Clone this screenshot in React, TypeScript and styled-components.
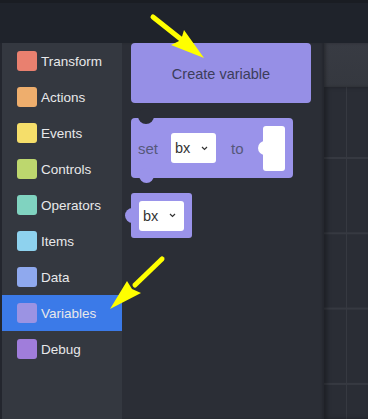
import React from "react";
import styled, { createGlobalStyle } from "styled-components";

const Global = createGlobalStyle`
  html, body { margin: 0; padding: 0; background: #1f232b; }
  body { font-family: "Liberation Sans", Arial, sans-serif; }
`;

const Page = styled.div`
  position: relative;
  width: 368px;
  height: 419px;
  display: flex;
  flex-direction: column;
  background: #23262e;
  overflow: hidden;
`;

const TopBar = styled.div`
  height: 43px;
  flex: none;
  background: #1f232b;
  border-top: 3px solid #1a1d23;
  box-sizing: border-box;
`;

const Main = styled.div`
  flex: 1;
  display: flex;
  padding-left: 2px;
`;

const Sidebar = styled.div`
  width: 120px;
  flex: none;
  background: #343840;
  display: flex;
  flex-direction: column;
`;

const Category = styled.div<{ $active?: boolean }>`
  height: 36px;
  display: flex;
  align-items: center;
  gap: 4px;
  padding-left: 15px;
  background: ${(p) => (p.$active ? "#3b7ae8" : "transparent")};
  color: #e8e8ea;
  font-size: 13.5px;
`;

const Swatch = styled.span<{ $color: string }>`
  width: 20px;
  height: 20px;
  border-radius: 3px;
  background: ${(p) => p.$color};
  flex: none;
`;

const Flyout = styled.div`
  width: 202px;
  flex: none;
  background: #2b2e36;
  box-shadow: inset -2px 0 2px rgba(0, 0, 0, 0.15);
  display: flex;
  flex-direction: column;
  align-items: flex-start;
  padding-left: 9px;
  box-sizing: border-box;
  gap: 15px;
`;

const CreateButton = styled.div`
  width: 180px;
  height: 60px;
  border-radius: 4px;
  background: #968fe6;
  color: #3c3d5a;
  font-size: 14.5px;
  display: flex;
  align-items: center;
  justify-content: center;
  padding-top: 2px;
  box-sizing: border-box;
`;

const SetBlock = styled.div`
  position: relative;
  width: 162px;
  height: 60px;
  border-radius: 4px;
  background: #9a93ea;
  display: flex;
  align-items: center;
  padding-left: 7px;
  box-sizing: border-box;
  &::before {
    content: "";
    position: absolute;
    left: 7px;
    top: -10px;
    width: 16px;
    height: 16px;
    border-radius: 50%;
    background: #2b2e36;
  }
  &::after {
    content: "";
    position: absolute;
    left: 8px;
    bottom: -5px;
    width: 15px;
    height: 15px;
    border-radius: 50%;
    background: #9a93ea;
  }
`;

const GetBlock = styled.div`
  position: relative;
  width: 61px;
  height: 45px;
  border-radius: 3px;
  background: #9a93ea;
  display: flex;
  align-items: center;
  padding-left: 8px;
  box-sizing: border-box;
  &::before {
    content: "";
    position: absolute;
    left: -6px;
    top: 15px;
    width: 15px;
    height: 15px;
    border-radius: 50%;
    background: #9a93ea;
  }
`;

const Word = styled.span<{ $ml: number }>`
  margin-left: ${(p) => p.$ml}px;
  color: #56587a;
  font-size: 15px;
`;

const Dropdown = styled.div<{ $ml: number }>`
  position: relative;
  z-index: 1;
  margin-left: ${(p) => p.$ml}px;
  width: 45px;
  height: 30px;
  border-radius: 3px;
  background: #ffffff;
  display: flex;
  align-items: center;
  justify-content: space-between;
  padding: 0 8px 0 4px;
  box-sizing: border-box;
  color: #333333;
  font-size: 14.5px;
`;

const Slot = styled.div`
  position: relative;
  margin-left: 19px;
  width: 22px;
  height: 45px;
  border-radius: 3px;
  background: #ffffff;
  &::before {
    content: "";
    position: absolute;
    left: -5px;
    top: 15px;
    width: 14px;
    height: 14px;
    border-radius: 50%;
    background: #ffffff;
  }
`;

const Workspace = styled.div`
  flex: 1;
  display: flex;
  flex-direction: column;
  background: #2a2d35;
`;

const WsToolbar = styled.div`
  height: 44px;
  flex: none;
  background: linear-gradient(180deg, #383b43 0%, #35383f 100%);
  box-shadow: inset 2px 0 3px rgba(0, 0, 0, 0.25);
`;

const Grid = styled.div`
  flex: 1;
  background-color: #2a2d35;
  background-image: linear-gradient(90deg, #363941 1px, transparent 1px),
    linear-gradient(180deg, #363941 2px, transparent 2px);
  background-size: 75px 75px, 75px 75.3px;
  background-position: 22px 0, 0 70px;
  box-shadow: inset 3px 0 4px rgba(0, 0, 0, 0.3);
`;

const Overlay = styled.svg`
  position: absolute;
  left: 0;
  top: 0;
  pointer-events: none;
`;

const Chevron = () => (
  <svg width="7" height="5" viewBox="0 0 7 5">
    <path d="M1 1 L3.5 3.5 L6 1" fill="none" stroke="#333" strokeWidth="1.2" />
  </svg>
);

const categories = [
  { name: "Transform", color: "#e9806f" },
  { name: "Actions", color: "#eeae6d" },
  { name: "Events", color: "#f5de6a" },
  { name: "Controls", color: "#bdd76e" },
  { name: "Operators", color: "#80d3c0" },
  { name: "Items", color: "#8ed2ee" },
  { name: "Data", color: "#8fa9ee" },
  { name: "Variables", color: "#9b93e3", active: true },
  { name: "Debug", color: "#a07ddb" },
];

export default function App() {
  return (
    <Page>
      <Global />
      <TopBar />
      <Main>
        <Sidebar>
          {categories.map((c) => (
            <Category key={c.name} $active={c.active}>
              <Swatch $color={c.color} />
              {c.name}
            </Category>
          ))}
        </Sidebar>
        <Flyout>
          <CreateButton>Create variable</CreateButton>
          <SetBlock>
            <Word $ml={0}>set</Word>
            <Dropdown $ml={13}>
              bx
              <Chevron />
            </Dropdown>
            <Word $ml={15}>to</Word>
            <Slot />
          </SetBlock>
          <GetBlock>
            <Dropdown $ml={0}>
              bx
              <Chevron />
            </Dropdown>
          </GetBlock>
        </Flyout>
        <Workspace>
          <WsToolbar />
          <Grid />
        </Workspace>
      </Main>
      <Overlay width="368" height="419" viewBox="0 0 368 419">
        <line x1="153" y1="17" x2="182" y2="40" stroke="#ffff00" strokeWidth="5" strokeLinecap="round" />
        <polygon points="204,58 171,45 181,40 184,30" fill="#ffff00" />
        <line x1="162" y1="259" x2="135" y2="285" stroke="#ffff00" strokeWidth="5" strokeLinecap="round" />
        <polygon points="110,309 127,281 132,289 141,293" fill="#ffff00" />
      </Overlay>
    </Page>
  );
}
